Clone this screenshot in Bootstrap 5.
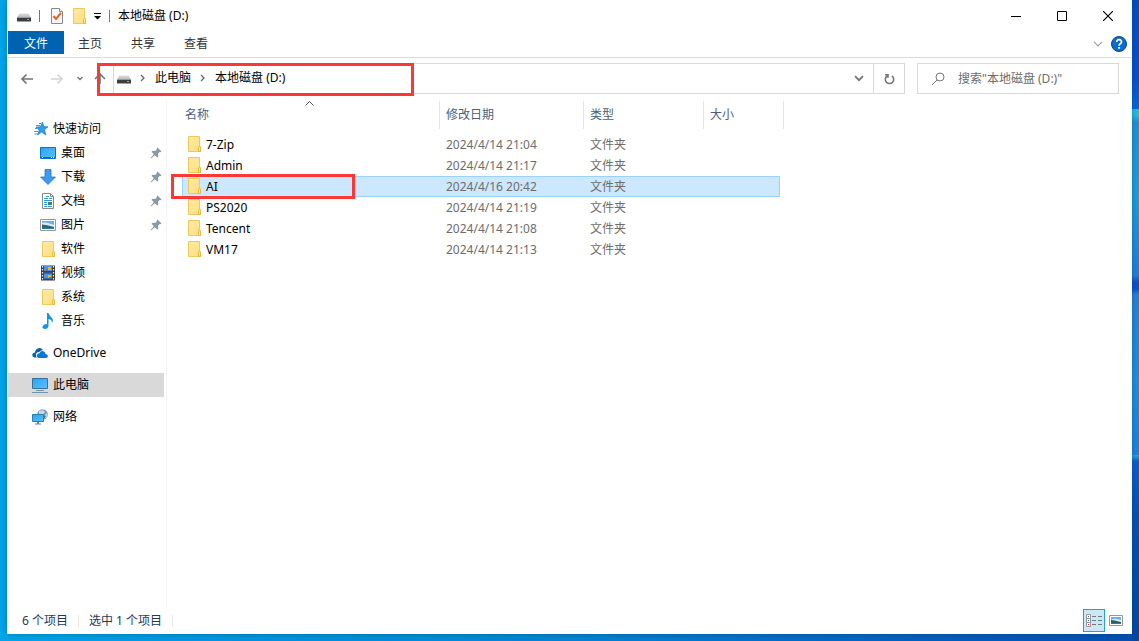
<!DOCTYPE html>
<html lang="zh-CN">
<head>
<meta charset="utf-8">
<meta name="viewport" content="width=device-width, initial-scale=1">
<title>本地磁盘 (D:)</title>
<link rel="stylesheet" href="https://cdn.jsdelivr.net/npm/bootstrap@5.3.0/dist/css/bootstrap.min.css">
<style>
body { font: 12px/16px "Noto Sans", "Noto Sans CJK SC", sans-serif; color: #000; }
svg { display: block; flex: none; }
a { color: inherit; text-decoration: none; }
button { background: none; border: 0; padding: 0; color: inherit; }
.desktop {
  padding: 0 7px 7px;
  background:
    linear-gradient(#0450c0 0, #0553cf 12%, #0668dd 17%, #22c0dc 17%, #22c0dc 18%, #1f93d8 19%, #1fa0da 30%, #2080da 43%, #0a55c8 44%, #0655cb 45%, #2685d8 46%, #2090da 60%, #1f85dc 71%, #20b0dc 71%, #0c60d0 72%, #0454b4 80%, #0349a0 100%) right / 7px 100% no-repeat,
    linear-gradient(90deg, #00a6ea, #0097e0 20%, #0086d4 50%, #0560c0 80%, #0450b0);
}
.window { background: #fff; border: 1px solid #fff; box-shadow: 0 0 7px #0028505c; }
.title-bar { height: 30px; }
.title-tools { padding-left: 8px; }
.title-bar .rule { width: 1px; height: 12px; background: #777; }
.win-btn { width: 46px; height: 30px; display: flex; align-items: center; justify-content: center; }
.ribbon { height: 27px; border-bottom: 1px solid #dadbdc; color: #333; }
.ribbon .tab { height: 23px; padding: 2px 15px 0 14px; }
.ribbon .tab-file { background: #0063b1; color: #fff; padding: 2px 16px 0; }
.nav-bar { height: 43px; padding: 5px 12px 7px 12px; }
.recent { margin: 0 11px 0 13px; }
.up { margin-right: 7px; }
.address { border: 1px solid #d9d9d9; height: 31px; }
.address .crumbs { padding: 0 0 2px 3px; }
.address .chev { margin: 0 9px; }
.address .refresh { width: 31px; height: 29px; border-left: 1px solid #d9d9d9; }
.address .drop { width: 28px; height: 29px; }
.mark-box { position: absolute; border: 3px solid #fc3836; pointer-events: none; }
.mark-path { left: -17px; top: -1px; width: 317px; height: 33px; }
.search-box { width: 202px; height: 31px; border: 1px solid #d9d9d9; margin-left: 12px; padding-left: 13px; }
.search-box input { border: 0; outline: 0; min-width: 0; color: #6d6d6d; padding: 0; margin-left: 13px; }
.search-box input::placeholder { color: #6d6d6d; opacity: 1; }
.side { width: 159px; border-right: 1px solid #f3f3f3; padding-top: 16px; }
.side a { display: flex; align-items: center; height: 24px; width: 156px; padding-left: 24px; gap: 5px; }
.side .sub { padding-left: 32px; }
.side .pin { margin-left: auto; margin-right: 2px; }
.side .current { background: #d9d9d9; }
.side .group { margin-top: 8px; }
.files { width: 602px; margin-left: 15px; table-layout: fixed; border-collapse: separate; border-spacing: 0; }
.files th { height: 28px; font-weight: 400; color: #4c607a; border-right: 1px solid #e5e5e5; padding: 0 0 0 6px; position: relative; }
.files th:first-child { padding-left: 3px; }
.files .sort { position: absolute; left: 123px; top: 0; }
.files td { height: 21px; padding: 0 0 0 6px; color: #6d6d6d; line-height: 19px; position: relative; border: 1px solid transparent; border-width: 1px 0; }
.files .spacer td { height: 5px; padding: 0; border: 0; }
.files td:first-child { color: #000; padding-left: 4px; border-left-width: 1px; }
.files td:nth-child(5) { padding: 0; }
.files .entry { gap: 5px; }
.files .entry svg { margin-bottom: 2px; }
.files .picked td:not(:last-child) { background: #cce8ff; border-color: #99d1ff; }
.files .picked td:nth-child(4) { border-right-width: 1px; }
.mark-row { left: -12px; top: -3px; width: 184px; height: 25px; }
.status { height: 25px; padding: 0 8px 0 14px; color: #1e395b; }
.status .texts { gap: 10px; padding-top: 1px; }
.status .rule { width: 1px; height: 12px; background: #e8e8e8; }
.view-btn { width: 22px; height: 23px; display: flex; align-items: center; justify-content: center; }
.view-btn.active { background: #cbe8f6; border: 1px solid #26a0da; }
</style>
</head>
<body>
<svg width="0" height="0" class="position-absolute" aria-hidden="true">
  <defs>
    <linearGradient id="gFolder" x2="1" y2="1"><stop stop-color="#ffeaa3"/><stop offset="1" stop-color="#ffdf80"/></linearGradient>
    <linearGradient id="gScreen" x2="1" y2="1"><stop stop-color="#2f9ff4"/><stop offset="1" stop-color="#55c4ff"/></linearGradient>
    <linearGradient id="gDrive" x2="0" y2="1"><stop stop-color="#dcdee0"/><stop offset="1" stop-color="#b4b8bc"/></linearGradient>
    <symbol id="folder" viewBox="0 0 16 16"><path d="M2.500.5h11v9.500l1 1v4.500h-12z" fill="url(#gFolder)" stroke="#eccb5c"/><path d="M12.500 15.500v-4l1-1.500 1 1.500v4z" fill="#ffe69a" stroke="#e5bb3e"/></symbol>
    <symbol id="drive" viewBox="0 0 16 16"><path d="M3.500 5.500h9L15 9.500H1z" fill="url(#gDrive)"/><path d="M1 9h14v4.500H1z" fill="#3c3f42"/><path d="M1 9h14v1H1z" fill="#999"/><path d="M11 11h2v1h-2z" fill="#35e84a"/></symbol>
    <symbol id="pin" viewBox="0 0 12 12"><path d="M7.500.5l4 4-1 .8-.8-.2-1.700 1.700.2 2.700-1 1L4.700 8.200 1 11.500.5 11l3.300-3.700L1.500 4.800l1-1 2.700.2 1.700-1.700-.2-.8z" fill="#8a99a5"/></symbol>
    <symbol id="picture" viewBox="0 0 16 12"><path d="M.5.5h15v11H.5z" fill="#fff" stroke="#999"/><path d="M2 2h12v8H2z" fill="#6fb0f5"/><path d="M2 4q3-1 6 0l6 2v2H2z" fill="#dcefff"/><path d="M2 5.500q5 0 12 2.500v2H2z" fill="#2b6a68"/><path d="M2 9h12v1H2z" fill="#2579ba"/></symbol>
    <symbol id="crumb" viewBox="0 0 6 8"><path d="M1 1l3 3-3 3" fill="none" stroke="#666" stroke-width="1.300"/></symbol>
  </defs>
</svg>

<div class="desktop vh-100 overflow-hidden">
<div class="window h-100 d-flex flex-column">

  <header class="title-bar d-flex align-items-center justify-content-between">
    <div class="title-tools d-flex align-items-center gap-2">
      <svg width="15" height="16" viewBox="0 0 15 16"><use href="#drive" width="16" height="16"/></svg>
      <span class="rule"></span>
      <button aria-label="属性"><svg width="16" height="16" viewBox="-2 0 16 16"><path d="M1.500.5h8l3 3v12h-11z" fill="#f7f7f7" stroke="#8a8a8a"/><path d="M9.500.5v3h3" fill="#fff" stroke="#8a8a8a"/><path d="M3.500 8l2.500 3 5-6" fill="none" stroke="#e8622c" stroke-width="2"/></svg></button>
      <button aria-label="新建文件夹"><svg width="14" height="16" viewBox="1 0 14 16"><use href="#folder" width="16" height="16"/></svg></button>
      <button aria-label="自定义快速访问工具栏"><svg width="7" height="7" viewBox="0 0 7 7"><path d="M0 0h7v1H0zM0 3h7L3.500 6.500z"/></svg></button>
      <span class="rule"></span>
      <span>本地磁盘 (D:)</span>
    </div>
    <div class="d-flex">
      <button class="win-btn" aria-label="最小化"><svg width="10" height="10"><path d="M0 5h10v1H0z"/></svg></button>
      <button class="win-btn" aria-label="最大化"><svg width="10" height="10"><path d="M.5.5h9v9h-9z" fill="none" stroke="#000"/></svg></button>
      <button class="win-btn" aria-label="关闭"><svg width="10" height="10"><path d="M0 0l10 10M10 0L0 10" stroke="#000" stroke-width="1.200"/></svg></button>
    </div>
  </header>

  <nav class="ribbon d-flex" aria-label="功能区">
    <button class="tab tab-file">文件</button>
    <button class="tab">主页</button>
    <button class="tab">共享</button>
    <button class="tab">查看</button>
    <div class="ms-auto d-flex align-items-center gap-2 me-1">
      <button aria-label="展开功能区"><svg width="10" height="6" viewBox="0 0 10 6"><path d="M1 .8l4 4 4-4" fill="none" stroke="#a0a0a0" stroke-width="1.200"/></svg></button>
      <button aria-label="帮助"><svg width="16" height="16" viewBox="0 0 16 16"><circle cx="8" cy="8" r="7.500" fill="#0a6ccc" stroke="#08488e"/><path d="M5.700 6q0-2.300 2.400-2.300T10.500 6q0 1-1.200 1.800T8.100 9.800" fill="none" stroke="#fff" stroke-width="1.700"/><path d="M7.200 11h1.900v1.800H7.200z" fill="#fff"/></svg></button>
    </div>
  </nav>

  <div class="nav-bar d-flex">
    <div class="d-flex align-items-center">
      <button aria-label="后退"><svg width="14" height="12" viewBox="0 0 14 12"><path d="M13 6H2M6.500 1.500L2 6l4.500 4.500" fill="none" stroke="#777" stroke-width="1.700"/></svg></button>
      <button class="ms-3" aria-label="前进"><svg width="14" height="12" viewBox="0 0 14 12"><path d="M1 6h11M7.500 1.500L12 6l-4.500 4.500" fill="none" stroke="#d5d5d5" stroke-width="1.600"/></svg></button>
      <button class="recent" aria-label="最近浏览的位置"><svg width="6" height="5" viewBox="0 0 6 5"><path d="M.5 1L3 3.500 5.500 1" fill="none" stroke="#777" stroke-width="1.500"/></svg></button>
      <button class="up" aria-label="上移"><svg width="12" height="14" viewBox="0 0 12 14"><path d="M6 12V2M1 7l5-5 5 5" fill="none" stroke="#777" stroke-width="1.600"/></svg></button>
    </div>
    <div class="address position-relative d-flex align-items-center flex-grow-1">
      <div class="crumbs d-flex align-items-center">
        <svg width="14" height="16" viewBox="1 0 14 16"><use href="#drive" width="16" height="16"/></svg>
        <svg class="chev" width="6" height="8"><use href="#crumb"/></svg>
        <a href="#pc">此电脑</a>
        <svg class="chev" width="6" height="8"><use href="#crumb"/></svg>
        <a href="#d">本地磁盘 (D:)</a>
      </div>
      <button class="drop ms-auto d-flex align-items-center justify-content-center" aria-label="以前的位置"><svg width="10" height="7" viewBox="0 0 10 7"><path d="M1 1.200l4 4 4-4" fill="none" stroke="#777" stroke-width="1.900"/></svg></button>
      <button class="refresh d-flex align-items-center justify-content-center" aria-label="刷新"><svg width="12" height="12" viewBox="0 0 12 12"><path d="M9 3A4.200 4.200 0 1 1 4 3M2 1.700h3v3" fill="none" stroke="#777" stroke-width="1.600"/></svg></button>
      <span class="mark-box mark-path"></span>
    </div>
    <label class="search-box d-flex align-items-center">
      <svg width="14" height="14" viewBox="0 0 14 14"><circle cx="9" cy="5" r="4" fill="none" stroke="#777"/><path d="M6 8l-5 5" stroke="#777"/></svg>
      <input type="search" class="flex-grow-1 bg-transparent" aria-label="搜索" placeholder='搜索"本地磁盘 (D:)"'>
    </label>
  </div>

  <div class="d-flex flex-grow-1">
    <nav class="side flex-shrink-0" aria-label="导航窗格">
      <a href="#quick"><svg width="16" height="16" viewBox="0 0 16 16"><path d="M10.500 1l1.200 4.600 4.300.2-3.500 2.900 1.300 5.300-4.200-2.900L5.500 14l1.700-4.900L4 6.100l4.300-.3z" fill="#2f9fe8" stroke="#1c79bd" stroke-width=".7"/><path d="M4 4.500h4M3 7.500h3M2 10.500h4M2.500 13h3M7 2.500h2" stroke="#3ba4e6"/></svg>快速访问</a>
      <a class="sub" href="#desktop"><svg width="16" height="16" viewBox="0 0 16 16"><path d="M.5 2.500h15v11H.5z" fill="url(#gScreen)" stroke="#0874c9"/><path d="M1 12h14v1H1z" fill="#1364aa"/><path d="M2 12h1v1H2zM11 12h1v1h-1zM13 12h1v1h-1z" fill="#fff"/></svg>桌面<svg class="pin" width="12" height="12"><use href="#pin"/></svg></a>
      <a class="sub" href="#downloads"><svg width="16" height="16" viewBox="0 0 16 16"><path d="M5 .5h6V8h4.500L8 15.500.5 8H5z" fill="#3f9aee" stroke="#2a75bf" stroke-width=".8"/></svg>下载<svg class="pin" width="12" height="12"><use href="#pin"/></svg></a>
      <a class="sub" href="#documents"><svg width="16" height="16" viewBox="0 0 16 16"><path d="M2.500.5h8l3 3v12h-11z" fill="#fff" stroke="#888"/><path d="M10.500.5v3h3" fill="none" stroke="#888"/><path d="M6 3.500h3M4 5.500h4M9 5.500h3M4 7.500h8M4 9.500h3M8 13.500h4M4 11.500h3M4 13.500h3" stroke="#2d9cdb"/><path d="M8 9h4v3H8z" fill="#467c72"/></svg>文档<svg class="pin" width="12" height="12"><use href="#pin"/></svg></a>
      <a class="sub" href="#pictures"><svg width="16" height="12"><use href="#picture"/></svg>图片<svg class="pin" width="12" height="12"><use href="#pin"/></svg></a>
      <a class="sub" href="#software"><svg width="16" height="16"><use href="#folder"/></svg>软件</a>
      <a class="sub" href="#videos"><svg width="16" height="16" viewBox="0 0 16 16"><path d="M1 .5h14v15H1z" fill="#3b3b3b"/><path d="M4 1h8v6.500H4zM4 8.500h8V15H4z" fill="#4d94e8"/><path d="M2.500 1v15M13.500 1v15" stroke="#eee" stroke-width="1.200" stroke-dasharray="1.500 1.500"/><path d="M8 2h3v3H8zM8 10h3v3H8z" fill="#d9bc32"/><path d="M6 4h2v2H6zM9 12h2v1H9z" fill="#c65b36"/><path d="M4 6h8v1.500H4zM4 13.500h8V15H4z" fill="#1f4679"/></svg>视频</a>
      <a class="sub" href="#system"><svg width="16" height="16"><use href="#folder"/></svg>系统</a>
      <a class="sub" href="#music"><svg width="16" height="16" viewBox="0 0 16 16"><path d="M7 0h1.500q.5 2.500 3 4.500 2.500 2.200.6 5.500-.1-3.300-3.600-4v7.500Q7.800 16 5 16q-3-.3-2.500-2.600Q3.500 11 7 11z" fill="#1592ea"/></svg>音乐</a>
      <a class="group" href="#onedrive"><svg width="16" height="16" viewBox="0 0 16 16"><path d="M2.500 12.500Q0 12 .2 9.700.7 7.500 3 7.500 3.300 4 6.500 3.200 9.500 2.700 11 5.200 8.500 4.800 7.200 7 4 7 3.900 10q0 1.500 1 2.500z" fill="#0a5fb4"/><path d="M6.500 13Q4.500 12.500 4.800 10.300 5.200 8.200 7.500 8.200 8.200 5.800 10.700 6q2.500.3 2.800 3 2.400.2 2.500 2.200-.2 1.700-2 1.800z" fill="#0a76d6"/></svg>OneDrive</a>
      <a class="group current" href="#pc"><svg width="16" height="16" viewBox="0 0 16 16"><path d="M.5 1.500h15v10H.5z" fill="url(#gScreen)" stroke="#37729e"/><path d="M4 13h8v1H4z" fill="#7295ad"/><path d="M0 15h16v1H0z" fill="#7295ad"/></svg>此电脑</a>
      <a class="group" href="#network"><svg width="16" height="16" viewBox="0 0 16 16"><circle cx="10.500" cy="5.500" r="5.300" fill="#6d9db6"/><path d="M7 2l4-1 2 2-2 3-4 1zM13 6l2-2v4l-3 2z" fill="#c3d9e2"/><path d="M11 6l3 1-2 3z" fill="#347da0"/><path d="M.5 5.500h11v7H.5z" fill="url(#gScreen)" stroke="#297fad"/><path d="M5 13h2v1.500h2v1H3v-1h2z" fill="#5b8caa"/></svg>网络</a>
    </nav>

    <main class="flex-grow-1">
      <table class="files">
        <colgroup><col style="width:258px"><col style="width:144px"><col style="width:120px"><col style="width:76px"><col style="width:4px"></colgroup>
        <thead>
          <tr>
            <th scope="col" aria-sort="ascending">名称<svg class="sort" width="9" height="5" viewBox="0 0 9 5"><path d="M.5 4.500l4-4 4 4" fill="none" stroke="#555"/></svg></th>
            <th scope="col">修改日期</th><th scope="col">类型</th><th scope="col" colspan="2">大小</th>
          </tr>
        </thead>
        <tbody>
          <tr class="spacer"><td colspan="5"></td></tr>
          <tr><td><div class="entry d-flex align-items-center"><svg width="14" height="16" viewBox="1 0 14 16"><use href="#folder" width="16" height="16"/></svg>7-Zip</div></td><td>2024/4/14 21:04</td><td>文件夹</td><td></td><td></td></tr>
          <tr><td><div class="entry d-flex align-items-center"><svg width="14" height="16" viewBox="1 0 14 16"><use href="#folder" width="16" height="16"/></svg>Admin</div></td><td>2024/4/14 21:17</td><td>文件夹</td><td></td><td></td></tr>
          <tr class="picked" aria-selected="true"><td><div class="entry d-flex align-items-center"><svg width="14" height="16" viewBox="1 0 14 16"><use href="#folder" width="16" height="16"/></svg>AI</div><span class="mark-box mark-row"></span></td><td>2024/4/16 20:42</td><td>文件夹</td><td></td><td></td></tr>
          <tr><td><div class="entry d-flex align-items-center"><svg width="14" height="16" viewBox="1 0 14 16"><use href="#folder" width="16" height="16"/></svg>PS2020</div></td><td>2024/4/14 21:19</td><td>文件夹</td><td></td><td></td></tr>
          <tr><td><div class="entry d-flex align-items-center"><svg width="14" height="16" viewBox="1 0 14 16"><use href="#folder" width="16" height="16"/></svg>Tencent</div></td><td>2024/4/14 21:08</td><td>文件夹</td><td></td><td></td></tr>
          <tr><td><div class="entry d-flex align-items-center"><svg width="14" height="16" viewBox="1 0 14 16"><use href="#folder" width="16" height="16"/></svg>VM17</div></td><td>2024/4/14 21:13</td><td>文件夹</td><td></td><td></td></tr>
        </tbody>
      </table>
    </main>
  </div>

  <footer class="status d-flex align-items-center">
    <div class="texts d-flex align-items-center">
      <span>6 个项目</span><span class="rule"></span><span>选中 1 个项目</span><span class="rule"></span>
    </div>
    <div class="ms-auto d-flex align-items-center gap-1">
      <button class="view-btn active" aria-label="详细信息"><svg width="16" height="13" viewBox="0 0 16 13"><path d="M.5.5h4v4h-4zM.5 4.500h4v4h-4zM.5 8.500h4v4h-4z" fill="#fff" stroke="#999"/><path d="M2 2h1v1H2z" fill="#555"/><path d="M2 6h1v1H2z" fill="#2b7cd3"/><path d="M2 10h1v1H2z" fill="#d22"/><path d="M6 2.500h4M12 2.500h4M6 6.500h4M12 6.500h4M6 10.500h4M12 10.500h4" stroke="#777"/></svg></button>
      <button aria-label="大缩略图"><svg width="14" height="11" viewBox="0 0 14 11"><path d="M.5.5h13v10H.5z" fill="#fff" stroke="#999"/><path d="M2 2h10v7H2z" fill="#6fa8f5"/><path d="M2 5q3-2 6-1l4 1v2H2z" fill="#dcefff"/><path d="M2 5q3 0 10 2v2H2z" fill="#2b6068"/><path d="M2 8h10v1H2z" fill="#2579ba"/></svg></button>
    </div>
  </footer>
</div>
</div>
<script src="https://cdn.jsdelivr.net/npm/bootstrap@5.3.0/dist/js/bootstrap.bundle.min.js"></script>
</body>
</html>
